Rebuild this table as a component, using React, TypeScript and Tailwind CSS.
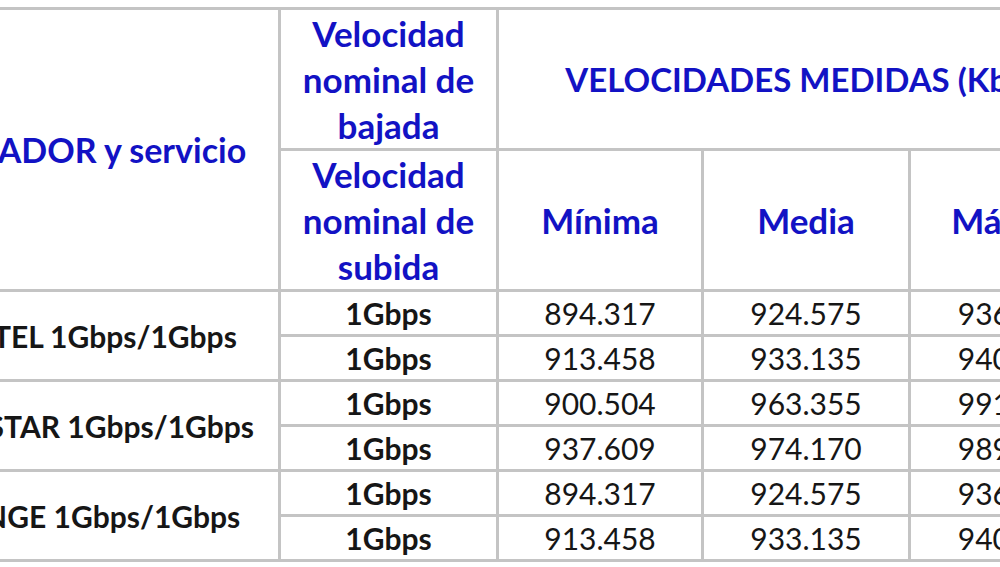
import React from 'react';

const rows = [
  { op: 'JAZZTEL 1Gbps/1Gbps', data: [['894.317', '924.575', '936.412'], ['913.458', '933.135', '940.221']] },
  { op: 'MOVISTAR 1Gbps/1Gbps', data: [['900.504', '963.355', '991.508'], ['937.609', '974.170', '989.874']] },
  { op: 'ORANGE 1Gbps/1Gbps', data: [['894.317', '924.575', '936.412'], ['913.458', '933.135', '940.221']] },
];

const cell = 'border-[3px] border-[#c4c4c4] p-0 text-center align-middle';
const head = 'text-[#1212c4] font-bold leading-[46px]';

const App: React.FC = () => {
  return (
    <div className="w-[1000px] h-[567px] overflow-hidden bg-white" style={{ fontFamily: 'Lato, "Open Sans", sans-serif' }}>
      <table className="table-fixed border-collapse ml-[-121px] mt-[7px] text-[30px] w-[1237px]">
        <colgroup>
          <col className="w-[399px]" />
          <col className="w-[218px]" />
          <col className="w-[205px]" />
          <col className="w-[207px]" />
          <col className="w-[208px]" />
        </colgroup>
        <thead>
          <tr className="h-[139px]">
            <th rowSpan={2} className={`${cell} ${head} text-[34px] whitespace-nowrap`}>
              <span className="inline-block ml-[-6px]">OPERADOR y servicio</span>
            </th>
            <th className={`${cell} ${head} text-[35px]`}>Velocidad<br />nominal de<br />bajada</th>
            <th colSpan={3} className={`${cell} ${head} text-[33px] whitespace-nowrap`}>VELOCIDADES MEDIDAS (Kbps)</th>
          </tr>
          <tr className="h-[141px]">
            <th className={`${cell} ${head} text-[35px]`}>Velocidad<br />nominal de<br />subida</th>
            <th className={`${cell} ${head} text-[35px]`}>Mínima</th>
            <th className={`${cell} ${head} text-[35px]`}>Media</th>
            <th className={`${cell} ${head} text-[35px]`}>Máxima</th>
          </tr>
        </thead>
        <tbody className="text-[#161616] leading-[36px]">
          {rows.map((r) =>
            r.data.map((d, i) => (
              <tr key={r.op + i} className="h-[45px]">
                {i === 0 && (
                  <td rowSpan={2} className={`${cell} font-bold whitespace-nowrap`}>{r.op}</td>
                )}
                <td className={`${cell} font-bold`}>1Gbps</td>
                {d.map((v, j) => (
                  <td key={j} className={cell}>{v}</td>
                ))}
              </tr>
            ))
          )}
        </tbody>
      </table>
    </div>
  );
};

export default App;
